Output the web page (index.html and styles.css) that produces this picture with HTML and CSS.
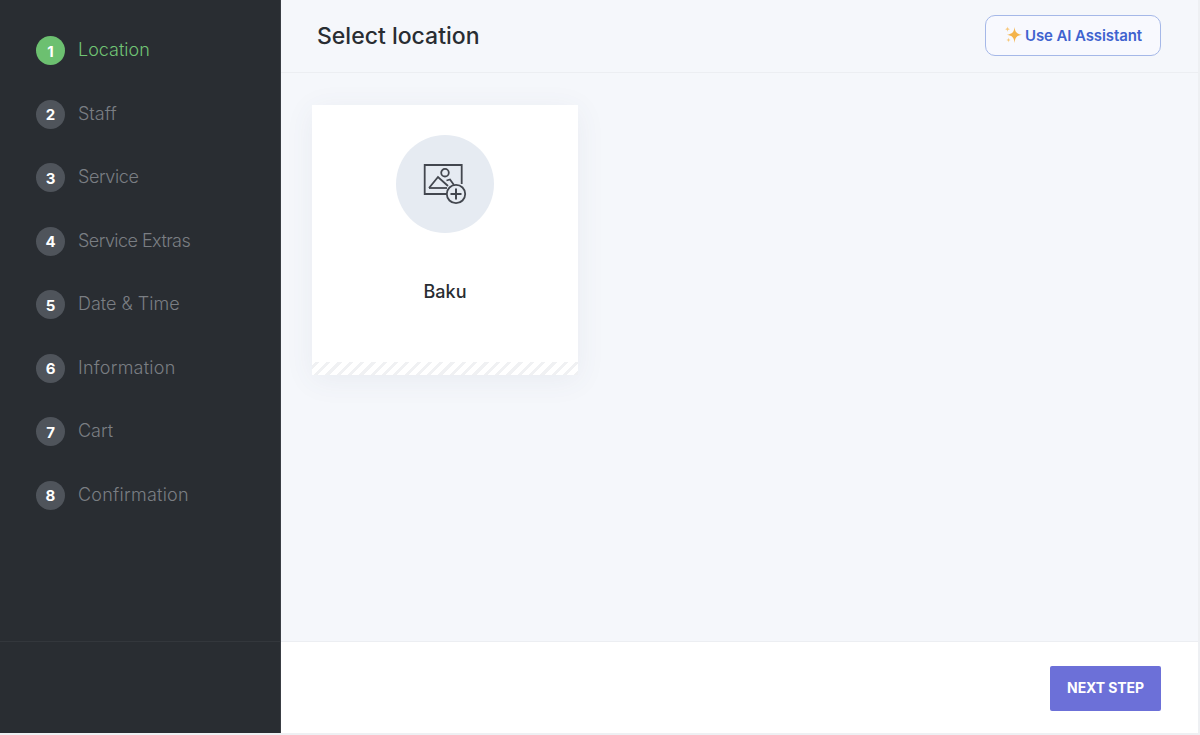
FILE: index.html
```html
<!DOCTYPE html>
<html lang="en">
<head>
<meta charset="utf-8">
<title>Select location</title>
<link rel="stylesheet" href="styles.css">
</head>
<body>
<div class="app">
  <aside class="sidebar">
    <ol class="steps">
      <li class="step active"><span class="num">1</span><span class="label">Location</span></li>
      <li class="step"><span class="num">2</span><span class="label">Staff</span></li>
      <li class="step"><span class="num">3</span><span class="label spaced-tight">Service</span></li>
      <li class="step"><span class="num">4</span><span class="label spaced-tighter">Service Extras</span></li>
      <li class="step"><span class="num">5</span><span class="label">Date &amp; Time</span></li>
      <li class="step"><span class="num">6</span><span class="label spaced-wide">Information</span></li>
      <li class="step"><span class="num">7</span><span class="label">Cart</span></li>
      <li class="step"><span class="num">8</span><span class="label spaced-wide">Confirmation</span></li>
    </ol>
    <div class="side-foot"></div>
  </aside>
  <main class="main">
    <header class="top">
      <h1 class="title">Select location</h1>
      <button class="ai-btn">
        <svg class="spark" width="18" height="18" viewBox="0 0 18 18"><path fill="#f4b44c" d="M10.500 1 C11 6 12.500 7.800 18 8.800 C12.500 9.800 11 11.500 10.500 17 C10 11.500 8.500 9.800 3 8.800 C8.500 7.800 10 6 10.500 1Z"/><path fill="#f7c97e" d="M3.500 .5 C3.700 2.300 4.200 2.800 6 3.200 C4.200 3.600 3.700 4.100 3.500 5.900 C3.300 4.100 2.800 3.600 1 3.200 C2.800 2.800 3.300 2.300 3.500 .5Z"/><path fill="#f7c97e" d="M4.500 11.500 C4.700 13.200 5.100 13.600 6.800 14 C5.100 14.400 4.700 14.800 4.500 16.500 C4.300 14.800 3.900 14.400 2.200 14 C3.900 13.600 4.300 13.200 4.500 11.500Z"/></svg>
        <span>Use AI Assistant</span>
      </button>
    </header>
    <section class="content">
      <article class="card">
        <div class="card-body">
          <div class="thumb">
            <svg width="44" height="42" viewBox="0 0 44 42" fill="none" stroke="#43474f" stroke-width="1.800">
              <path d="M38.700 21V2H1.700V31H24"/>
              <circle cx="22" cy="9.700" r="3.800"/>
              <path d="M6 25L15 14L25 23"/>
              <path d="M6 25H24"/>
              <path d="M23.500 17.500L27 16.500L31 22"/>
              <circle cx="33" cy="31" r="9.200" fill="#e6ebf2"/>
              <path d="M33 25.500V36.500M27.500 31H38.500" stroke-width="2"/>
            </svg>
          </div>
          <div class="name">Baku</div>
        </div>
        <div class="stripes"></div>
      </article>
    </section>
    <footer class="bottom">
      <button class="next">NEXT STEP</button>
    </footer>
  </main>
</div>
</body>
</html>
```
FILE: styles.css
```css
* { box-sizing: border-box; }
html, body { margin: 0; padding: 0; height: 100%; background: #eef0f3; overflow: hidden; }
body { font-family: "Inter", "Liberation Sans", sans-serif; }
.app { display: flex; width: 1198px; height: 733px; background: #f5f7fb; }
.sidebar { width: 281px; flex: none; background: #292d32; border-right: 1px solid #3a3e44; display: flex; flex-direction: column; }
.steps { list-style: none; margin: 0; padding: 36px 0 0 36px; flex: 1; display: flex; flex-direction: column; gap: 34.500px; }
.step { display: flex; align-items: center; gap: 13px; height: 29px; }
.num { width: 29px; height: 29px; border-radius: 50%; background: #4f545b; color: #fff; font-weight: 700; font-size: 15px; display: flex; align-items: center; justify-content: center; padding-top: 1px; }
.label { color: #7a7e83; font-weight: 300; font-size: 18px; position: relative; top: -1px; }
.spaced-tight { letter-spacing: -.4px; }
.spaced-tighter { letter-spacing: -.55px; }
.spaced-wide { letter-spacing: .25px; }
.active .num { background: #6cc070; }
.active .label { color: #70c474; }
.side-foot { height: 92px; border-top: 1px solid #33373c; }
.main { flex: 1; display: flex; flex-direction: column; min-width: 0; }
.top { height: 73px; border-bottom: 1px solid #eceef2; display: flex; align-items: center; justify-content: space-between; padding: 0 37px 1px 36px; }
.title { margin: 0; font-size: 23px; font-weight: 500; color: #292d32; }
.ai-btn { width: 176px; height: 41px; display: flex; align-items: center; justify-content: center; gap: 3px; border: 1px solid #a5b8e8; border-radius: 10px; background: #f8f9fe; color: #3f63cf; font-family: inherit; font-size: 15px; font-weight: 600; letter-spacing: -.1px; padding: 0; }
.spark { position: relative; top: -1px; }
.content { flex: 1; padding: 32px 31px; }
.card { width: 266px; height: 270px; background: #fff; box-shadow: 0 5px 28px rgba(70, 80, 110, .07); display: flex; flex-direction: column; }
.card-body { flex: 1; display: flex; flex-direction: column; align-items: center; padding-top: 30px; }
.thumb { width: 98px; height: 98px; border-radius: 50%; background: #e6ebf2; display: flex; align-items: center; justify-content: center; }
.name { margin-top: 48px; font-size: 18px; font-weight: 500; color: #292d32; }
.stripes { height: 13px; background: repeating-linear-gradient(-45deg, #f0f1f3 0 3px, #ffffff 3px 8px); }
.bottom { height: 92px; background: #fff; border-top: 1px solid #eceef2; display: flex; align-items: center; justify-content: flex-end; padding: 0 37px 0 0; }
.next { width: 111px; height: 45px; margin-top: 1px; border: 0; border-radius: 2px; background: #6c70d8; color: #fff; font-family: inherit; font-size: 14px; font-weight: 700; letter-spacing: -.1px; padding: 0 0 1px; }
```
